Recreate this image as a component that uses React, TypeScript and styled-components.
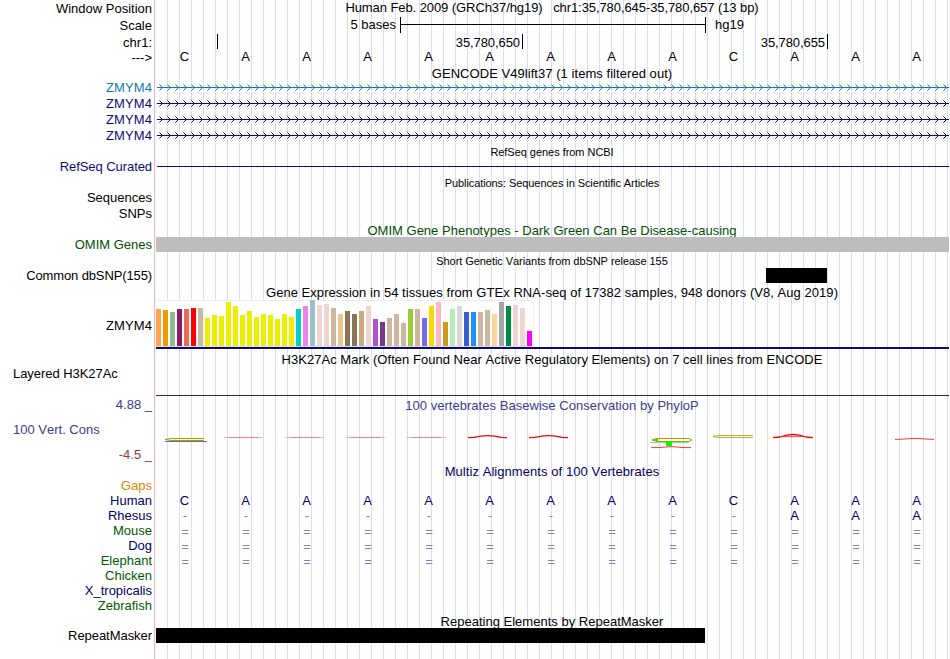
import React from 'react';
import styled, { createGlobalStyle } from 'styled-components';

const GlobalStyle = createGlobalStyle`
  body {
    margin: 0;
    background: #fff;
    overflow: hidden;
  }
`;

const Browser = styled.main`
  width: 950px;
  height: 659px;
  overflow: hidden;
  box-sizing: border-box;
  font-family: 'Liberation Sans', Arial, sans-serif;
  font-size: 13px;
  line-height: 15px;
  font-kerning: none;
  white-space: pre;
  color: #000;
  background:
    linear-gradient(#ffb0b0, #ffb0b0) 154px 0 / 1px 100% no-repeat,
    repeating-linear-gradient(to right, #dcdcf8 0 1px, transparent 1px 12px) 167px 0 / 783px 100% no-repeat;
`;

const Row = styled.div<{ $h: number }>`
  display: grid;
  grid-template-columns: 153px 1fr;
  column-gap: 3px;
  height: ${(p) => p.$h}px;
`;

const Label = styled.div<{ $top?: number; $color?: string; $left?: boolean; $spacing?: number }>`
  padding-top: ${(p) => p.$top || 0}px;
  padding-left: 13px;
  padding-right: 1px;
  text-align: ${(p) => (p.$left ? 'left' : 'right')};
  letter-spacing: ${(p) => p.$spacing || 0}px;
  color: ${(p) => p.$color || '#000'};
`;

const Title = styled.div<{ $top?: number; $color?: string; $small?: boolean; $spacing?: number }>`
  padding-top: ${(p) => p.$top || 0}px;
  margin-right: 2px;
  text-align: center;
  font-size: ${(p) => (p.$small ? 11 : 13)}px;
  letter-spacing: ${(p) => p.$spacing || 0}px;
  color: ${(p) => p.$color || '#000'};
`;

const Block = styled.div<{ $start?: number; $width: number; $color: string }>`
  margin-left: ${(p) => p.$start || 0}px;
  width: ${(p) => p.$width}px;
  height: 15px;
  background: ${(p) => p.$color};
`;

const IntronLine = styled.div`
  height: 1px;
  margin: 7px 1px 0;
  background: #0c0c78;
`;

const ScaleBar = styled.div`
  display: flex;
`;

const ScaleText = styled.span`
  width: 240px;
  margin-right: 4px;
  text-align: right;
`;

const ScaleRule = styled.span`
  box-sizing: border-box;
  width: 306px;
  height: 16px;
  margin-right: 9px;
  border: solid #000;
  border-width: 0 1px;
  background: linear-gradient(#000, #000) 0 7px / 100% 1px no-repeat;
`;

const Ruler = styled.div`
  display: flex;
  padding-top: 1px;
`;

const RulerCell = styled.div<{ $width: number }>`
  box-sizing: border-box;
  width: ${(p) => p.$width}px;
  height: 15px;
  padding-top: 1px;
  padding-right: 2px;
  border-right: 1px solid #000;
  text-align: right;
  letter-spacing: -0.08px;
`;

const Bases = styled.div<{ $top?: number }>`
  display: flex;
  margin-left: -2px;
  padding-top: ${(p) => p.$top || 0}px;
`;

const Base = styled.span<{ $color: string; $gap: boolean }>`
  flex: 0 0 61px;
  box-sizing: border-box;
  padding-left: ${(p) => (p.$gap ? 1 : 0)}px;
  text-align: center;
  color: ${(p) => p.$color};
`;

const ExpressionTrack = styled.div`
  height: 47px;
  margin-right: 1px;
  border-bottom: 2px solid #0c0c78;
`;

const ExpressionChart = styled.div`
  display: flex;
  align-items: flex-end;
  gap: 2px;
  box-sizing: border-box;
  width: 378px;
  height: 47px;
  background: #fff;
  box-shadow: inset 0 1px #eee, inset -1px 0 #eee, inset 0 -1px #ddd;
  padding-bottom: 1px;
`;

const TissueBar = styled.span<{ $h: number; $color: string }>`
  width: 5px;
  height: ${(p) => p.$h}px;
  background: ${(p) => p.$color};
`;

const SignalTrack = styled.div`
  margin-right: 1px;
  border-bottom: 1px solid #24245e;
`;

const AxisLabels = styled.div`
  display: flex;
  flex-direction: column;
  padding-top: 1px;
`;

const AxisLabel = styled(Label)`
  height: 25px;
`;

const Drawing = styled.svg`
  display: block;
`;

const NAVY = '#0c0c78';
const ALIGN_BLUE = '#000064';
const ALIGN_GREEN = '#005a00';
const GAP_BLUE = '#8282b8';

const transcripts = ['#1478b4', NAVY, NAVY, NAVY];

const tissues: [number, string][] = [
  [37, '#ffa54f'], [36, '#ee9a00'], [34, '#8fbc8f'], [37, '#8b1c62'], [37, '#ee6a50'], [38, '#ff0000'], [38, '#cdb79e'],
  [28, '#eeee00'], [31, '#eeee00'], [30, '#eeee00'], [44, '#eeee00'], [40, '#eeee00'], [31, '#eeee00'], [35, '#eeee00'],
  [29, '#eeee00'], [32, '#eeee00'], [31, '#eeee00'], [27, '#eeee00'], [32, '#eeee00'], [29, '#eeee00'],
  [37, '#00cdcd'], [40, '#ee82ee'], [46, '#9ac0cd'], [41, '#eed5d2'], [42, '#eed5d2'], [38, '#cdb79e'], [32, '#eec591'],
  [35, '#8b7355'], [32, '#8b7355'], [35, '#cdaa7d'], [40, '#eed5d2'], [27, '#b452cd'], [24, '#7a378b'], [28, '#cdb79e'],
  [32, '#cdb79e'], [23, '#cdb79e'], [37, '#9acd32'], [37, '#cdb79e'], [28, '#7a67ee'], [40, '#ffd700'], [44, '#ffb6c1'],
  [24, '#cd9b1d'], [37, '#b4eeb4'], [40, '#d9d9d9'], [34, '#3a5fcd'], [34, '#1e90ff'], [34, '#cdb79e'], [36, '#cdb79e'],
  [32, '#ffd39b'], [44, '#a6a6a6'], [40, '#008b45'], [41, '#eed5d2'], [38, '#eed5d2'], [15, '#ff00ff'],
];

const alignments: { name: string; color: string; bases: string; top?: number }[] = [
  { name: 'Human', color: ALIGN_BLUE, bases: 'CAAAAAAAACAAA' },
  { name: 'Rhesus', color: ALIGN_BLUE, bases: '----------AAA' },
  { name: 'Mouse', color: ALIGN_GREEN, bases: '=============', top: 1 },
  { name: 'Dog', color: ALIGN_BLUE, bases: '=============', top: 1 },
  { name: 'Elephant', color: ALIGN_GREEN, bases: '=============', top: 1 },
  { name: 'Chicken', color: ALIGN_GREEN, bases: '' },
  { name: 'X_tropicalis', color: ALIGN_BLUE, bases: '' },
  { name: 'Zebrafish', color: ALIGN_GREEN, bases: '' },
];

function Sequence({ bases, color, top }: { bases: string; color: string; top?: number }) {
  return (
    <Bases $top={top}>
      {bases.split('').map((b, i) => {
        const gap = b === '-' || b === '=';
        return (
          <Base key={i} $gap={gap} $color={gap ? GAP_BLUE : color}>
            {b}
          </Base>
        );
      })}
    </Bases>
  );
}

function StrandArrows({ color }: { color: string }) {
  const tips = Array.from({ length: 99 }, (_, i) => 6.5 + i * 8);
  return (
    <Drawing width="794" height="16" fill="none" stroke={color}>
      <path d="M1 7.5H793" />
      <path d={tips.map((x) => `M${x - 3} 4.5l3 3l-3 3`).join('')} />
    </Drawing>
  );
}

// Conservation logo, y = 0 is window row 413
function Conservation() {
  return (
    <Drawing width="794" height="50" viewBox="156 413 794 50" fill="none">
      <path d="M165 441.5H207" stroke="#6464dc" />
      <path d="M204 438.5H171L165 439.5L171 440.5H204" stroke="#a0a000" />
      <path d="M171 439.5H203" stroke="#ffffb4" />
      {[224, 285, 346, 407].map((x) => (
        <g key={x} stroke="#ff0000">
          <path d={`M${x} 437.5h39`} opacity="0.3" />
          <path d={`M${x + 5} 437.5h29`} opacity="0.3" />
        </g>
      ))}
      {[468, 529].map((x) => (
        <path key={x} d={`M${x} 437.7l6 -0.3q14 -3.6 27 0l6 0.3`} stroke="#ff0000" strokeWidth="1.2" />
      ))}
      <path d="M689 438.5H657L652 440L657 441.5H689L692 440Z" stroke="#a0a000" />
      <path d="M652 440L658 438.5V441.5Z" fill="#a0a000" />
      <path d="M650 442.5H688" stroke="#64ff64" />
      <path d="M666 442h6v4h-6z" fill="#00ff00" />
      <path d="M651 447.6h7q14 -2 26 0h7" stroke="#ff0000" strokeWidth="0.8" />
      <path d="M753 435.5H719L713 436.5L719 437.5H753" stroke="#a0a000" strokeWidth="0.8" />
      <path d="M773 437.7l7 -0.7q13 -5 26 0l7 0.7" stroke="#ff0000" strokeWidth="1.3" />
      <path d="M783 436.6h20" stroke="#ff0000" strokeWidth="0.7" />
      <path d="M895 439.4l8 -0.3q12 -1.6 24 0l7 0.3" stroke="#ff0000" strokeWidth="0.8" />
    </Drawing>
  );
}

export default function App() {
  return (
    <Browser>
      <GlobalStyle />
      <Row $h={17}>
        <Label $top={1}>Window Position</Label>
        <Title $spacing={-0.08}>{'Human Feb. 2009 (GRCh37/hg19)   chr1:35,780,645-35,780,657 (13 bp)'}</Title>
      </Row>
      <Row $h={16}>
        <Label $top={1}>Scale</Label>
        <ScaleBar>
          <ScaleText>5 bases</ScaleText>
          <ScaleRule />
          <span>hg19</span>
        </ScaleBar>
      </Row>
      <Row $h={16}>
        <Label $top={2}>chr1:</Label>
        <Ruler>
          <RulerCell $width={62} />
          <RulerCell $width={305}>35,780,650</RulerCell>
          <RulerCell $width={305}>35,780,655</RulerCell>
        </Ruler>
      </Row>
      <Row $h={16}>
        <Label $top={1}>{'--->'}</Label>
        <Sequence bases="CAAAAAAAACAAA" color="#000" />
      </Row>
      <Row $h={15}>
        <span />
        <Title $top={1} $spacing={0.05}>GENCODE V49lift37 (1 items filtered out)</Title>
      </Row>
      {transcripts.map((color, i) => (
        <Row key={i} $h={16}>
          <Label $color={color} $spacing={0.1}>ZMYM4</Label>
          <StrandArrows color={color} />
        </Row>
      ))}
      <Row $h={15}>
        <span />
        <Title $small $top={1} $spacing={-0.04}>RefSeq genes from NCBI</Title>
      </Row>
      <Row $h={16}>
        <Label $color={NAVY} $spacing={-0.07}>RefSeq Curated</Label>
        <IntronLine />
      </Row>
      <Row $h={15}>
        <span />
        <Title $small $top={1} $spacing={-0.08}>Publications: Sequences in Scientific Articles</Title>
      </Row>
      <Row $h={16}>
        <Label>Sequences</Label>
      </Row>
      <Row $h={16}>
        <Label>SNPs</Label>
      </Row>
      <Row $h={15}>
        <span />
        <Title $top={1} $color="#005000" $spacing={0.01}>OMIM Gene Phenotypes - Dark Green Can Be Disease-causing</Title>
      </Row>
      <Row $h={15}>
        <Label $color="#005000">OMIM Genes</Label>
        <Block $width={793} $color="#bebebe" />
      </Row>
      <Row $h={16}>
        <span />
        <Title $small $top={2} $spacing={-0.06}>Short Genetic Variants from dbSNP release 155</Title>
      </Row>
      <Row $h={15}>
        <Label $spacing={-0.12}>Common dbSNP(155)</Label>
        <Block $start={610} $width={61} $color="#000" />
      </Row>
      <Row $h={17}>
        <span />
        <Title $top={2} $spacing={0.045}>Gene Expression in 54 tissues from GTEx RNA-seq of 17382 samples, 948 donors (V8, Aug 2019)</Title>
      </Row>
      <Row $h={49}>
        <Label $top={18} $spacing={0.1}>ZMYM4</Label>
        <ExpressionTrack>
          <ExpressionChart>
            {tissues.map(([h, color], i) => (
              <TissueBar key={i} $h={h} $color={color} />
            ))}
          </ExpressionChart>
        </ExpressionTrack>
      </Row>
      <Row $h={16}>
        <span />
        <Title $top={3} $spacing={0.03}>H3K27Ac Mark (Often Found Near Active Regulatory Elements) on 7 cell lines from ENCODE</Title>
      </Row>
      <Row $h={31}>
        <Label $left $top={1} $spacing={-0.05}>Layered H3K27Ac</Label>
        <SignalTrack />
      </Row>
      <Row $h={67}>
        <AxisLabels>
          <AxisLabel $color="#3c3c8c">4.88 _</AxisLabel>
          <AxisLabel $left $color="#3c3c8c">100 Vert. Cons</AxisLabel>
          <AxisLabel $color="#8c3c3c">-4.5 _</AxisLabel>
        </AxisLabels>
        <div>
          <Title $top={2} $color="#3c3c8c" $spacing={0.035}>100 vertebrates Basewise Conservation by PhyloP</Title>
          <Conservation />
        </div>
      </Row>
      <Row $h={15}>
        <span />
        <Title $top={1} $color={ALIGN_BLUE} $spacing={0.06}>Multiz Alignments of 100 Vertebrates</Title>
      </Row>
      <Row $h={15}>
        <Label $color="#e68200">Gaps</Label>
      </Row>
      {alignments.map((row) => (
        <Row key={row.name} $h={15}>
          <Label $color={row.color}>{row.name}</Label>
          <Sequence bases={row.bases} color={row.color} top={row.top} />
        </Row>
      ))}
      <Row $h={15}>
        <span />
        <Title $top={1} $spacing={0.01}>Repeating Elements by RepeatMasker</Title>
      </Row>
      <Row $h={15}>
        <Label $spacing={-0.05}>RepeatMasker</Label>
        <Block $width={549} $color="#000" />
      </Row>
    </Browser>
  );
}
